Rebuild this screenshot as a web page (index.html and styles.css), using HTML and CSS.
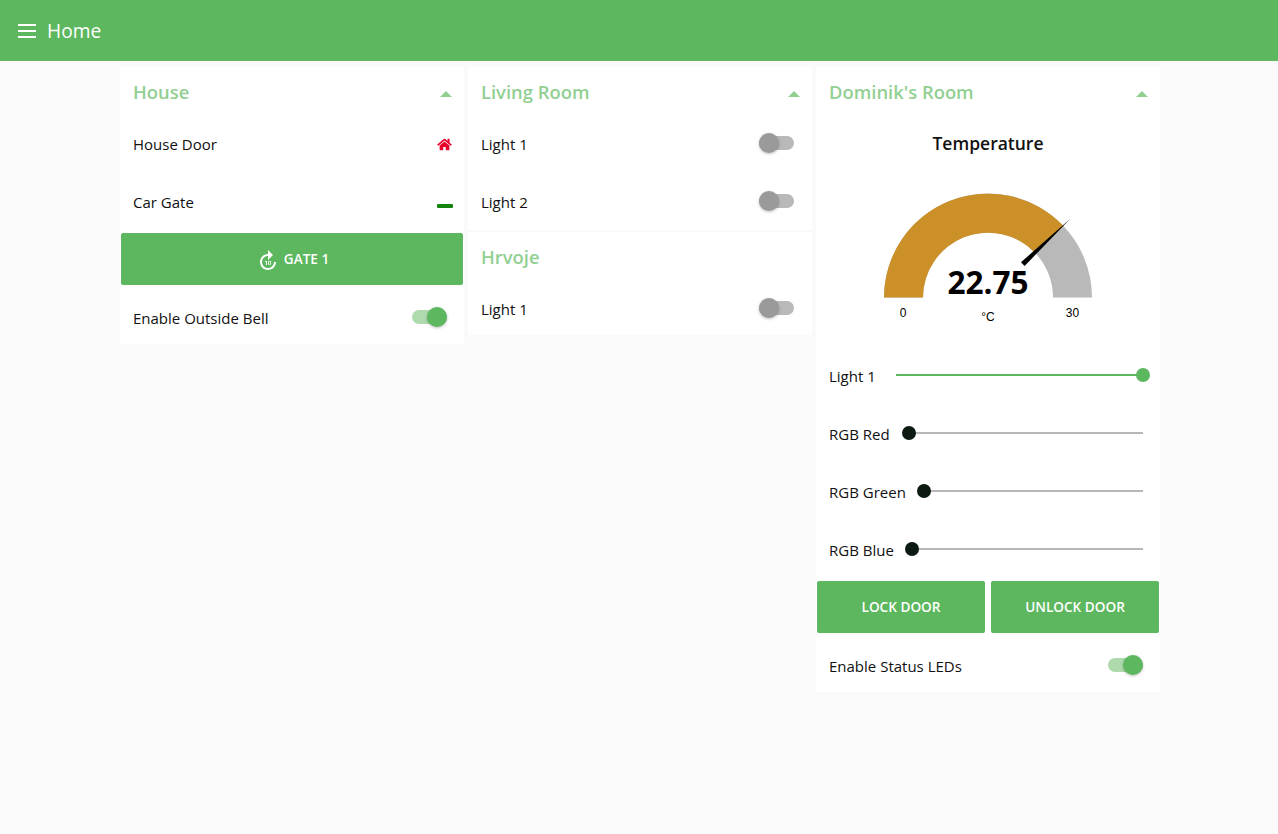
FILE: index.html
```html
<!DOCTYPE html>
<html lang="en">
<head>
<meta charset="utf-8">
<title>Home</title>
<link rel="stylesheet" href="styles.css">
</head>
<body>
<header class="toolbar">
  <svg class="menu-icon" width="18" height="14" viewBox="0 0 18 14"><path d="M0 0h18v2H0zM0 6h18v2H0zM0 12h18v2H0z" fill="#fff"/></svg>
  <span class="toolbar-title">Home</span>
</header>
<main class="columns">
  <div class="column">
    <section class="card">
      <div class="card-title"><span>House</span><i class="caret"></i></div>
      <div class="row"><span>House Door</span><svg class="home-icon" width="15" height="13" viewBox="0 0 576 512"><path fill="#e6002a" d="M280.37 148.26L96 300.11V464a16 16 0 0 0 16 16l112.06-.29a16 16 0 0 0 15.92-16V368a16 16 0 0 1 16-16h64a16 16 0 0 1 16 16v95.64a16 16 0 0 0 16 16.05L464 480a16 16 0 0 0 16-16V300L295.67 148.26a12.19 12.19 0 0 0-15.3 0zM571.6 251.47L488 182.56V44.05a12 12 0 0 0-12-12h-56a12 12 0 0 0-12 12v72.61L318.47 43a48 48 0 0 0-61 0L4.34 251.47a12 12 0 0 0-1.6 16.9l25.5 31A12 12 0 0 0 45.15 301l235.22-193.74a12.19 12.19 0 0 1 15.3 0L530.9 301a12 12 0 0 0 16.9-1.6l25.5-31a12 12 0 0 0-1.7-16.93z"/></svg></div>
      <div class="row"><span>Car Gate</span><i class="dash"></i></div>
      <button class="btn btn-wide"><svg class="btn-icon" width="24" height="24" viewBox="0 0 24 24"><path fill="#fff" d="M4 13c0 4.4 3.6 8 8 8s8-3.6 8-8h-2c0 3.3-2.7 6-6 6s-6-2.7-6-6 2.7-6 6-6v4l5-5-5-5v4c-4.4 0-8 3.6-8 8zm6.8 3H10v-3.3L9 13v-.7l1.8-.6h.1V16zm4.3-1.8c0 .3 0 .6-.1.8l-.3.6s-.3.3-.5.3-.4.1-.6.1-.4 0-.6-.1-.3-.2-.5-.3-.2-.3-.3-.6-.1-.5-.1-.8v-.7c0-.3 0-.6.1-.8l.3-.6s.3-.3.5-.3.4-.1.6-.1.4 0 .6.1.3.2.5.3.2.3.3.6.1.5.1.8v.7zm-.9-.8v-.5s-.1-.2-.1-.3-.1-.1-.2-.2-.2-.1-.3-.1-.2 0-.3.1l-.2.2s-.1.2-.1.3v2s.1.2.1.3.1.1.2.2.2.1.3.1.2 0 .3-.1l.2-.2s.1-.2.1-.3v-1.5z"/></svg>GATE 1</button>
      <div class="row row-after-btn"><span>Enable Outside Bell</span><span class="switch on"><i></i></span></div>
    </section>
  </div>
  <div class="column">
    <section class="card card-top">
      <div class="card-title"><span>Living Room</span><i class="caret"></i></div>
      <div class="row"><span>Light 1</span><span class="switch"><i></i></span></div>
      <div class="row"><span>Light 2</span><span class="switch"><i></i></span></div>
    </section>
    <section class="card">
      <div class="card-title"><span>Hrvoje</span></div>
      <div class="row"><span>Light 1</span><span class="switch"><i></i></span></div>
    </section>
  </div>
  <div class="column">
    <section class="card">
      <div class="card-title"><span>Dominik's Room</span><i class="caret"></i></div>
      <div class="gauge">
        <div class="gauge-title">Temperature</div>
        <svg class="gauge-svg" width="344" height="176" viewBox="816 168 344 176">
          <path fill="#b9b9b9" d="M884 297.6A104 104 0 0 1 1092 297.6H1053A65 65 0 0 0 923 297.6Z"/>
          <path fill="#cb9128" d="M884 297.6A104 104 0 0 1 1063.4 226L1035.1 252.9A65 65 0 0 0 923 297.6Z"/>
          <path fill="#000" d="M1021 262.2L1024.6 266L1070 219Z"/>
          <text class="gauge-value" x="988" y="294" text-anchor="middle">22.75</text>
          <text class="gauge-label" x="903" y="317" text-anchor="middle">0</text>
          <text class="gauge-label" x="988" y="321" text-anchor="middle">°C</text>
          <text class="gauge-label" x="1072.5" y="317" text-anchor="middle">30</text>
        </svg>
      </div>
      <div class="row"><span>Light 1</span><div class="slider full"><i></i></div></div>
      <div class="row"><span>RGB Red</span><div class="slider"><i></i></div></div>
      <div class="row"><span>RGB Green</span><div class="slider tight"><i></i></div></div>
      <div class="row"><span>RGB Blue</span><div class="slider tight"><i></i></div></div>
      <div class="btn-row">
        <button class="btn">LOCK DOOR</button>
        <button class="btn">UNLOCK DOOR</button>
      </div>
      <div class="row row-after-btn"><span>Enable Status LEDs</span><span class="switch on"><i></i></span></div>
    </section>
  </div>
</main>
</body>
</html>
```
FILE: styles.css
```css
* { box-sizing: border-box; }
html, body { margin: 0; height: 100%; }
body {
  background: #fafafa;
  color: #111;
  font-family: "Open Sans", "Noto Sans", sans-serif;
  font-size: 15px;
  overflow: hidden;
}
.toolbar {
  height: 61px;
  background: #5cb75e;
  display: flex;
  align-items: center;
  padding-left: 18px;
  gap: 11px;
  color: #fff;
}
.toolbar-title { font-size: 19.2px; }
.columns {
  display: flex;
  gap: 4px;
  padding: 6px 0 0 120px;
}
.column {
  width: 344px;
  display: flex;
  flex-direction: column;
  gap: 2px;
}
.card {
  background: #fff;
  display: flex;
  flex-direction: column;
}
.card-top { padding-bottom: 2px; }
.card-title {
  height: 51px;
  padding: 0 17px 2px 13px;
  display: flex;
  align-items: center;
  justify-content: space-between;
  color: #92cf92;
  font-size: 18.4px;
  font-weight: 600;
}
.caret {
  width: 0;
  height: 0;
  border-left: 6px solid transparent;
  border-right: 6px solid transparent;
  border-bottom: 6px solid #8fcf8f;
  margin-right: -5px;
  margin-top: 4px;
}
.row {
  height: 52px;
  margin-top: 6px;
  padding: 0 17px 0 13px;
  display: flex;
  align-items: center;
  justify-content: space-between;
  white-space: nowrap;
}
.card-title + .row { margin-top: 0; }
.row-after-btn { margin-top: 7px; }
.home-icon { margin-right: -5px; }
.dash {
  width: 16px;
  height: 4px;
  border-radius: 1px;
  background: #14850f;
  margin: 7px -6px 0 0;
}
.btn {
  height: 52px;
  flex: 1;
  border: 0;
  border-radius: 2px;
  background: #5cb75e;
  color: #fff;
  font: 600 13.6px "Open Sans", "Noto Sans", sans-serif;
  display: flex;
  align-items: center;
  justify-content: center;
  padding: 0 0 2px;
}
.btn-wide {
  flex: none;
  margin: 5px 1px 0;
}
.btn-icon { margin: 6px 4px 0 1px; }
.btn-row {
  display: flex;
  gap: 6px;
  margin: 5px 1px 0;
}
.switch {
  position: relative;
  width: 35px;
  height: 14px;
  border-radius: 7px;
  background: #b9b9b9;
  flex: none;
  margin: -2px 1px 0 0;
}
.switch i {
  position: absolute;
  left: 0;
  top: -3px;
  width: 20px;
  height: 20px;
  border-radius: 50%;
  background: #9a9a9a;
  box-shadow: 0 1px 3px rgba(0,0,0,.25);
}
.switch.on { background: #aedaae; margin-right: 0; }
.switch.on i { left: 15px; background: #5cb75e; }
.gauge {
  height: 226px;
  display: flex;
  flex-direction: column;
}
.gauge-title {
  height: 50px;
  text-align: center;
  font-size: 17.5px;
  font-weight: 600;
  line-height: 50px;
}
.gauge-svg { display: block; }
.gauge-value {
  font: 700 31.5px "Open Sans", "Noto Sans", sans-serif;
  fill: #000;
}
.gauge-label {
  font: 12px "Liberation Sans", sans-serif;
  fill: #000;
}
.slider {
  position: relative;
  flex: 1;
  height: 2px;
  margin: -2px 0 0 19px;
  background: #b7b7b7;
}
.slider.tight { margin-left: 18px; }
.slider i {
  position: absolute;
  left: -7px;
  top: -6px;
  width: 14px;
  height: 14px;
  border-radius: 50%;
  background: #0d1a12;
}
.slider.full { background: #5cb75e; margin-left: 20px; }
.slider.full i { left: auto; right: -7px; background: #5cb75e; }
```
